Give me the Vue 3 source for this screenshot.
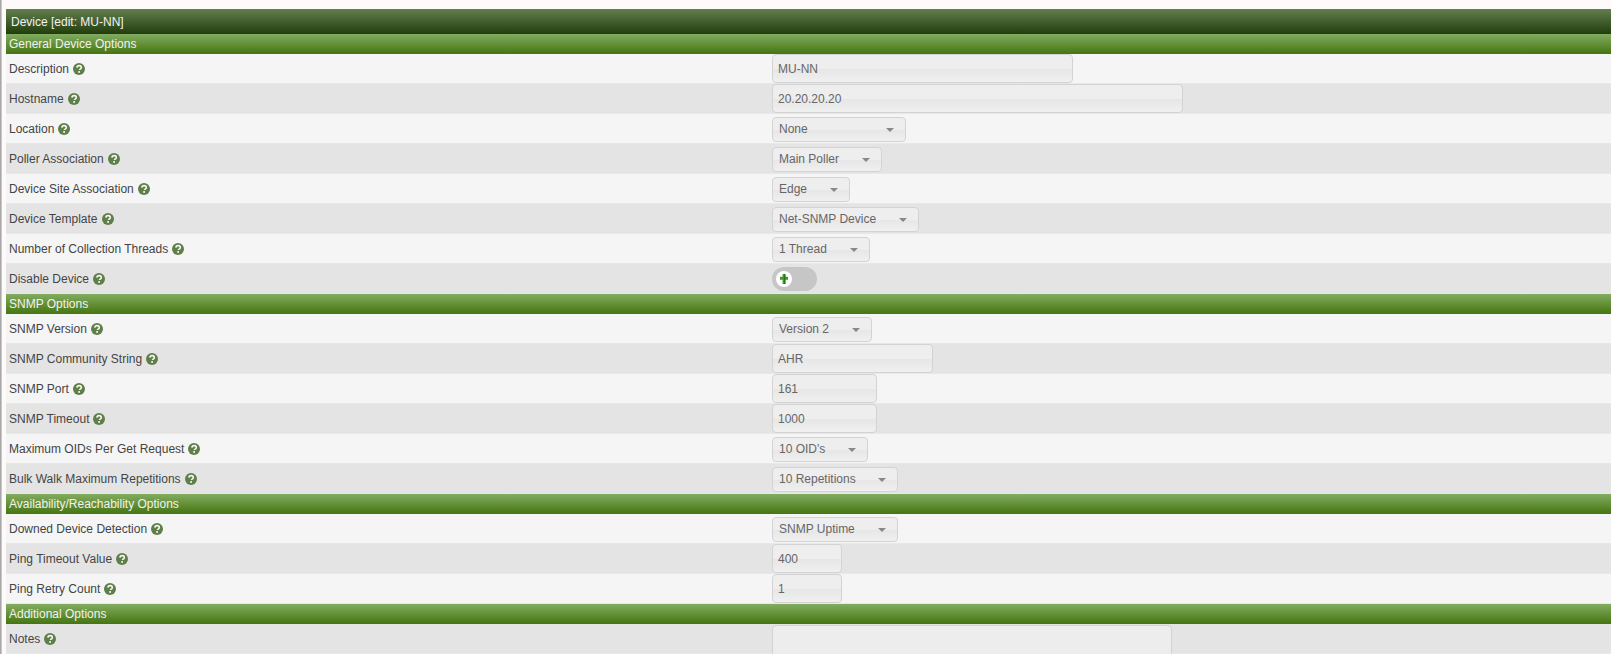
<script setup>
const sections = [
  { title: 'General Device Options', rows: [
    { label: 'Description', type: 'input', value: 'MU-NN', width: 301 },
    { label: 'Hostname', type: 'input', value: '20.20.20.20', width: 411, shaded: true },
    { label: 'Location', type: 'select', value: 'None', width: 134 },
    { label: 'Poller Association', type: 'select', value: 'Main Poller', width: 110, shaded: true },
    { label: 'Device Site Association', type: 'select', value: 'Edge', width: 78 },
    { label: 'Device Template', type: 'select', value: 'Net-SNMP Device', width: 147, shaded: true },
    { label: 'Number of Collection Threads', type: 'select', value: '1 Thread', width: 98 },
    { label: 'Disable Device', type: 'toggle', shaded: true },
  ]},
  { title: 'SNMP Options', rows: [
    { label: 'SNMP Version', type: 'select', value: 'Version 2', width: 100 },
    { label: 'SNMP Community String', type: 'input', value: 'AHR', width: 161, shaded: true },
    { label: 'SNMP Port', type: 'input', value: '161', width: 105 },
    { label: 'SNMP Timeout', type: 'input', value: '1000', width: 105, shaded: true },
    { label: 'Maximum OIDs Per Get Request', type: 'select', value: "10 OID's", width: 96 },
    { label: 'Bulk Walk Maximum Repetitions', type: 'select', value: '10 Repetitions', width: 126, shaded: true },
  ]},
  { title: 'Availability/Reachability Options', rows: [
    { label: 'Downed Device Detection', type: 'select', value: 'SNMP Uptime', width: 126 },
    { label: 'Ping Timeout Value', type: 'input', value: '400', width: 70, shaded: true },
    { label: 'Ping Retry Count', type: 'input', value: '1', width: 70 },
  ]},
  { title: 'Additional Options', rows: [
    { label: 'Notes', type: 'textarea', width: 400, shaded: true },
  ]},
]
</script>

<template>
  <div class="page">
    <div class="panel">
      <div class="header">Device [edit: MU-NN]</div>
      <template v-for="s in sections" :key="s.title">
        <div class="section">{{ s.title }}</div>
        <div v-for="r in s.rows" :key="r.label" class="row" :class="{ even: r.shaded }">
          <div class="label">
            <span>{{ r.label }}</span>
            <svg class="help" viewBox="0 0 12 12" width="12" height="12" aria-hidden="true">
              <circle cx="6" cy="6" r="6" fill="#5f7f48" />
              <path d="M3.9 4.6C4 3.3 5 2.6 6.1 2.6c1.3 0 2.2.8 2.2 1.8 0 .9-.6 1.4-1.2 1.7-.5.3-.6.5-.6 1" fill="none" stroke="#f5f5f5" stroke-width="1.6" />
              <rect x="5.2" y="8.1" width="1.8" height="1.7" fill="#f5f5f5" />
            </svg>
          </div>
          <div class="field">
            <div v-if="r.type === 'input'" class="input" :style="{ width: r.width + 'px' }">{{ r.value }}</div>
            <div v-else-if="r.type === 'select'" class="select" :style="{ width: r.width + 'px' }">
              <span>{{ r.value }}</span>
              <i class="caret"></i>
            </div>
            <div v-else-if="r.type === 'toggle'" class="toggle">
              <span class="knob">
                <svg viewBox="0 0 8 10" width="8" height="10" aria-hidden="true">
                  <path d="M2.6 0h2.8v2.8H8v3H5.4V10H2.6V5.8H0v-3h2.6z" fill="#3f9a1e" />
                  <path d="M5.4 0v10H4V0z" fill="#237a10" />
                </svg>
              </span>
            </div>
            <div v-else class="textarea" :style="{ width: r.width + 'px' }"></div>
          </div>
        </div>
      </template>
    </div>
  </div>
</template>

<style scoped>
.page {
  height: 654px;
  overflow: hidden;
  box-sizing: border-box;
  padding: 9px 0 0 6px;
  background: #fffafa;
  font-family: "Liberation Sans", Arial, sans-serif;
  font-size: 12px;
  position: relative;
}
.page::before {
  content: "";
  position: absolute;
  left: 0;
  top: 0;
  bottom: 0;
  width: 1px;
  border-right: 1px solid #c8c8c8;
  background: #a8a8a8;
}
.header {
  height: 25px;
  line-height: 26px;
  padding-left: 5px;
  color: #f2f2f2;
  background: linear-gradient(#627f50, #223d0c);
}
.section {
  height: 20px;
  line-height: 20px;
  padding-left: 3px;
  color: #f2f2f2;
  background: linear-gradient(#82ac60, #457510);
}
.row {
  height: 30px;
  box-sizing: border-box;
  display: flex;
  background: #f5f5f5;
  border-bottom: 1px solid #e8e8e8;
}
.row.even {
  background: #e4e4e4;
}
.label {
  width: 766px;
  flex: none;
  display: flex;
  align-items: center;
  gap: 4px;
  padding-left: 3px;
  box-sizing: border-box;
  color: #444;
  height: 29px;
}
.help {
  flex: none;
}
.field {
  display: flex;
  align-items: center;
  height: 29px;
}
.input {
  height: 29px;
  line-height: 28px;
  box-sizing: border-box;
  padding-left: 5px;
  border: 1px solid #d3d3d3;
  border-radius: 4px;
  color: #666;
  background: linear-gradient(#eeeeee 0, #eeeeee 50%, #e6e6e6 52%, #f0f0f0 100%);
}
.select {
  height: 25px;
  margin-top: 1px;
  box-sizing: border-box;
  display: flex;
  align-items: center;
  justify-content: space-between;
  padding: 0 11px 0 6px;
  border: 1px solid #d3d3d3;
  border-radius: 4px;
  color: #666;
  background: linear-gradient(#eeeeee 0, #eeeeee 50%, #e6e6e6 52%, #f0f0f0 100%);
}
.caret {
  width: 0;
  height: 0;
  margin-top: 2px;
  border-left: 4px solid transparent;
  border-right: 4px solid transparent;
  border-top: 4px solid #888;
}
.toggle {
  width: 45px;
  height: 24px;
  margin-top: 1px;
  border-radius: 12px;
  background: #c6c6c6;
  display: flex;
  align-items: center;
  padding-left: 4px;
  box-sizing: border-box;
}
.knob {
  width: 16px;
  height: 16px;
  border-radius: 50%;
  background: #fff;
  display: flex;
  align-items: center;
  justify-content: center;
}
.textarea {
  margin-top: 1px;
  align-self: flex-start;
  height: 80px;
  box-sizing: border-box;
  border: 1px solid #d3d3d3;
  border-radius: 4px;
  background: #ededed;
}
</style>

<style>
html, body { margin: 0; overflow: hidden; }
</style>
